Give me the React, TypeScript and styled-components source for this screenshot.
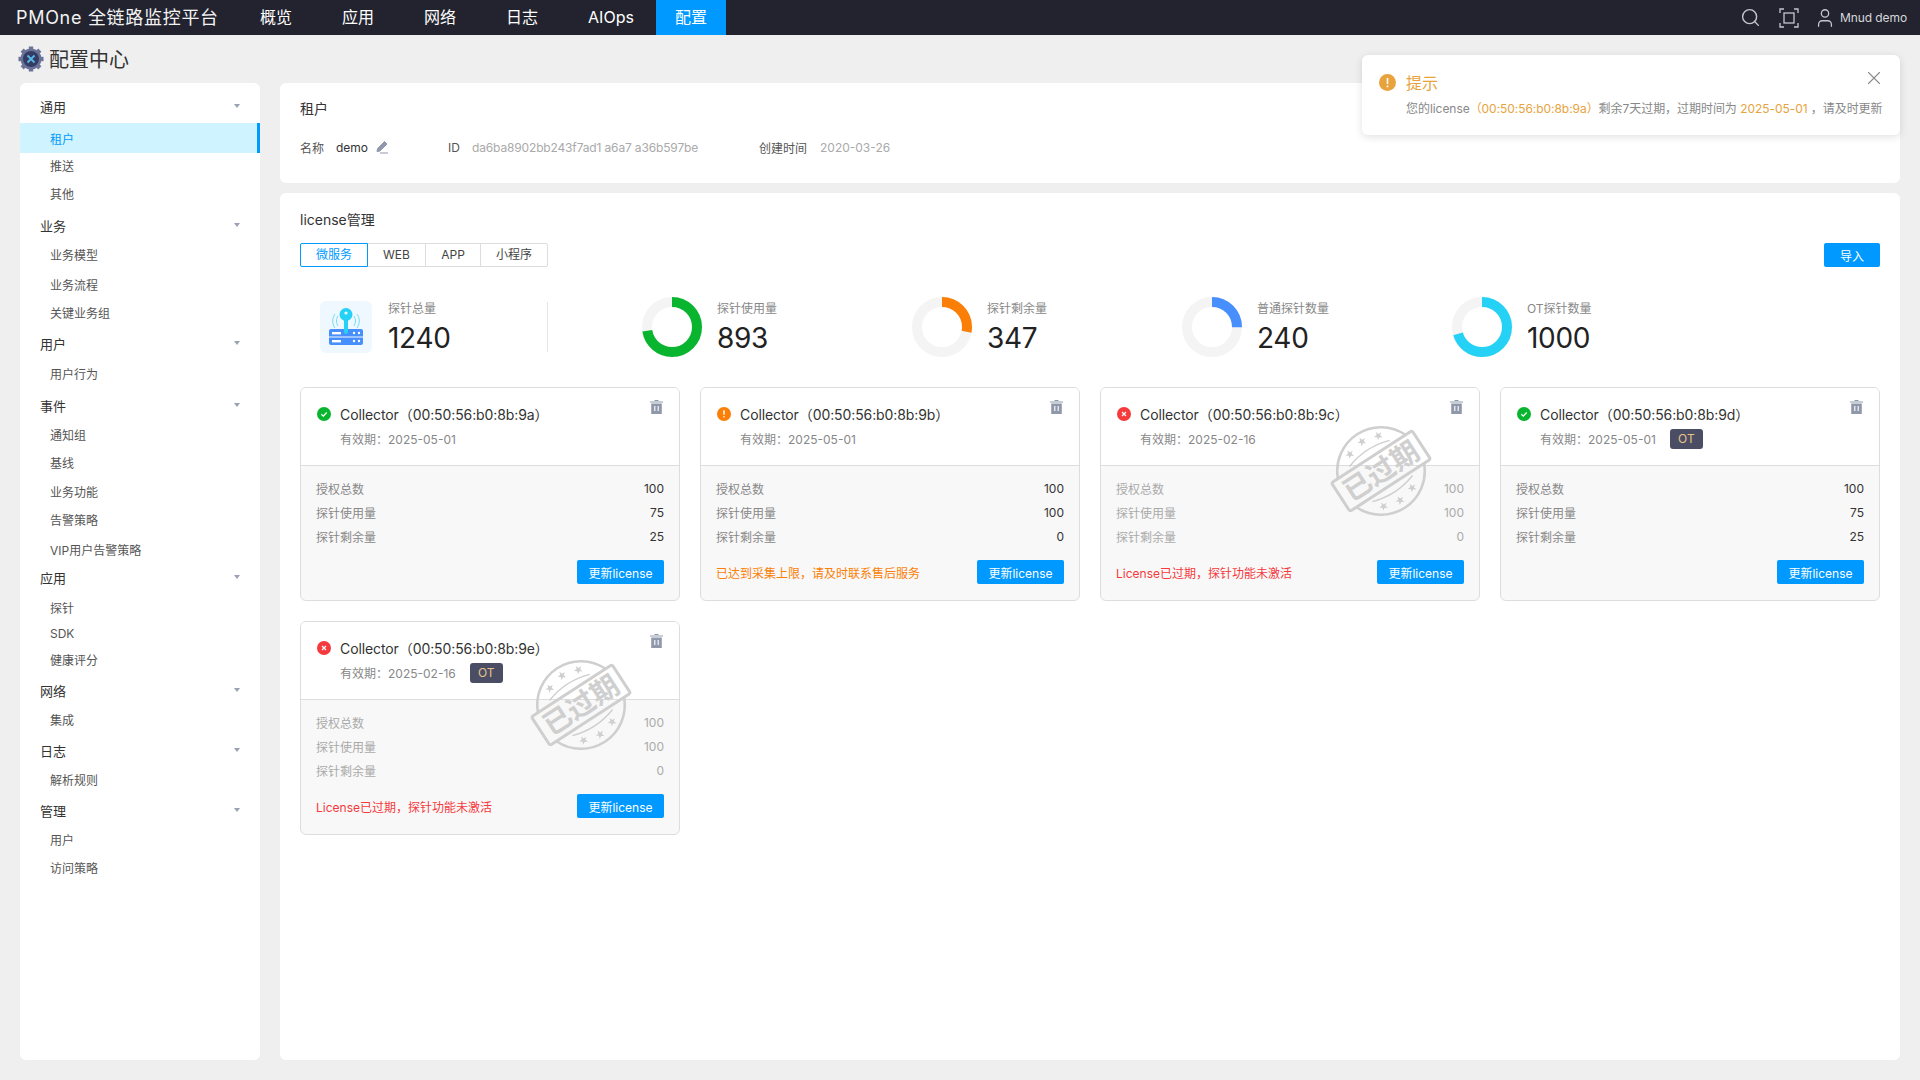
import styled, { createGlobalStyle } from "styled-components";
import { Search, User, X } from "lucide-react";

const GlobalStyle = createGlobalStyle`
    html, body {
        margin: 0;
        padding: 0;
        background-color: #efefef;
        font-family: "Inter", "Noto Sans CJK SC", sans-serif;
        overflow: hidden;
    }
    * {
        box-sizing: border-box;
    }
`;

const Page = styled.div`
    width: 1920px;
    height: 1080px;
    position: relative;
`;
const TopBar = styled.header`
    height: 35px;
    display: flex;
    align-items: stretch;
    background-color: #22232f;
    color: #fff;
`;
const Logo = styled.div`
    width: 240px;
    padding-left: 16px;
    line-height: 35px;
    font-size: 18px;
    letter-spacing: 0.7px;
    white-space: nowrap;
    color: #f2f2f2;
`;
const Nav = styled.nav`
    display: flex;
    gap: 10px;
`;
const NavItem = styled.a<{ $active?: boolean }>`
    padding: 0 ${(p) => (p.$active ? 19 : 20)}px;
    margin-left: ${(p) => (p.$active ? "-8px" : "0")};
    line-height: 35px;
    font-size: 16px;
    color: #fff;
    background-color: ${(p) => (p.$active ? "#0099ff" : "transparent")};
`;
const TopRight = styled.div`
    margin-left: auto;
    display: flex;
    align-items: center;
    padding-right: 13px;
    color: #c4c6cc;
`;
const TopIcon = styled.span<{ $gap: number }>`
    display: flex;
    margin-right: ${(p) => p.$gap}px;
`;
const UserName = styled.span`
    font-size: 12px;
    letter-spacing: -0.1px;
    color: #d6d7da;
`;
const TitleBar = styled.div`
    height: 48px;
    display: flex;
    align-items: center;
    gap: 5px;
    padding: 0 0 0 18px;
    font-size: 20px;
    color: #333;
`;
const TitleText = styled.span`
    margin-top: -2px;
`;
const Content = styled.div`
    height: 977px;
    display: flex;
    gap: 20px;
    padding: 0 20px;
`;
const Sidebar = styled.aside`
    width: 240px;
    padding-top: 10px;
    background-color: #fff;
    border-radius: 6px;
`;
const GroupHead = styled.div<{ $gap: number }>`
    height: 26px;
    margin-top: ${(p) => p.$gap}px;
    padding: 0 20px;
    display: flex;
    align-items: center;
    justify-content: space-between;
    font-size: 13px;
    color: #333;
`;
const Caret = styled.i`
    width: 0;
    height: 0;
    border-left: 3.5px solid transparent;
    border-right: 3.5px solid transparent;
    border-top: 4.5px solid #9aa1b3;
`;
const SideItem = styled.div<{ $gap: number; $active?: boolean }>`
    height: ${(p) => (p.$active ? 30 : 26)}px;
    margin-top: ${(p) => p.$gap}px;
    padding-left: 30px;
    display: flex;
    align-items: center;
    font-size: 12px;
    color: ${(p) => (p.$active ? "#0099ff" : "#555")};
    background-color: ${(p) => (p.$active ? "#cff3ff" : "transparent")};
    border-right: ${(p) => (p.$active ? "3px solid #0099ff" : "none")};
`;
const Main = styled.main`
    flex: 1;
    min-width: 0;
    display: flex;
    flex-direction: column;
    gap: 10px;
`;
const TenantCard = styled.section`
    height: 100px;
    padding: 16px 20px 0;
    background-color: #fff;
    border-radius: 6px;
`;
const SectionTitle = styled.h2`
    margin: 0;
    font-size: 14px;
    font-weight: 400;
    line-height: 20px;
    color: #333;
`;
const TenantRow = styled.div`
    margin-top: 18px;
    height: 20px;
    display: flex;
    align-items: center;
    font-size: 12px;
    color: #555;
`;
const Field = styled.span<{ $w: number }>`
    width: ${(p) => p.$w}px;
    flex: none;
    display: flex;
    align-items: center;
`;
const Muted = styled.span`
    color: #aaa;
`;
const TenantId = styled(Muted)`
    letter-spacing: -0.15px;
`;
const Dark = styled.span`
    color: #333;
`;
const LicenseCard = styled.section`
    flex: 1;
    padding: 17px 20px 0;
    background-color: #fff;
    border-radius: 6px;
`;
const ToolRow = styled.div`
    margin-top: 13px;
    display: flex;
    justify-content: space-between;
`;
const Tabs = styled.div`
    display: flex;
    height: 24px;
`;
const Tab = styled.div<{ $active?: boolean; $w: number }>`
    width: ${(p) => p.$w}px;
    margin-left: -1px;
    text-align: center;
    line-height: 22px;
    font-size: 12px;
    color: ${(p) => (p.$active ? "#0099ff" : "#444")};
    border: 1px solid ${(p) => (p.$active ? "#0099ff" : "#ddd")};
    position: relative;
    z-index: ${(p) => (p.$active ? 1 : 0)};
    &:first-child {
        margin-left: 0;
        border-radius: 2px 0 0 2px;
    }
    &:last-child {
        border-radius: 0 2px 2px 0;
    }
`;
const PrimaryButton = styled.button<{ $w: number }>`
    width: ${(p) => p.$w}px;
    height: 24px;
    padding: 0;
    border: none;
    border-radius: 2px;
    background-color: #0099ff;
    color: #fff;
    font-size: 12px;
    font-family: inherit;
    white-space: nowrap;
`;
const Stats = styled.div`
    margin-top: 30px;
    height: 60px;
    display: flex;
    padding-left: 20px;
`;
const TotalStat = styled.div`
    width: 322px;
    flex: none;
    display: flex;
    align-items: center;
`;
const StatIconBox = styled.div`
    width: 52px;
    height: 52px;
    flex: none;
    margin-right: 16px;
    border-radius: 6px;
    background-color: #f0f8ff;
    display: flex;
    align-items: center;
    justify-content: center;
`;
const Divider = styled.i`
    width: 1px;
    height: 50px;
    margin-left: 69px;
    background-color: #e6e6e6;
`;
const DonutStat = styled.div`
    width: 270px;
    flex: none;
    display: flex;
    align-items: center;
    gap: 15px;
`;
const StatText = styled.div`
    align-self: stretch;
    padding-top: 4px;
    display: flex;
    flex-direction: column;
    min-width: 90px;
`;
const StatLabel = styled.div`
    font-size: 12px;
    line-height: 16px;
    color: #888;
`;
const StatValue = styled.div`
    margin-top: 1px;
    font-size: 28px;
    line-height: 40px;
    letter-spacing: -0.3px;
    color: #222;
`;
const Grid = styled.div`
    margin-top: 30px;
    display: grid;
    grid-template-columns: repeat(4, 380px);
    gap: 20px;
`;
const Card = styled.div`
    height: 214px;
    position: relative;
    overflow: hidden;
    border: 1px solid #ddd;
    border-radius: 6px;
    background-color: #f8f8f8;
    display: flex;
    flex-direction: column;
`;
const CardHead = styled.div`
    height: 78px;
    flex: none;
    padding: 16px 16px 0;
    background-color: #fff;
    border-bottom: 1px solid #ddd;
    position: relative;
`;
const CardTitle = styled.div`
    height: 20px;
    display: flex;
    align-items: center;
    gap: 9px;
    font-size: 14px;
    letter-spacing: -0.1px;
    color: #333;
`;
const Expiry = styled.div`
    margin-top: 4px;
    height: 20px;
    padding-left: 23px;
    display: flex;
    align-items: center;
    gap: 14px;
    font-size: 12px;
    color: #888;
`;
const OtBadge = styled.span`
    width: 33px;
    height: 20px;
    margin-top: 2px;
    border-radius: 3px;
    background-color: #4a4d63;
    color: #e8c48c;
    text-align: center;
    line-height: 20px;
`;
const Trash = styled.svg`
    position: absolute;
    right: 16px;
    top: 12px;
`;
const CardBody = styled.div`
    flex: 1;
    padding: 10px 15px 0;
`;
const Metric = styled.div<{ $expired?: boolean }>`
    height: 24px;
    display: flex;
    align-items: center;
    justify-content: space-between;
    font-size: 12px;
    color: ${(p) => (p.$expired ? "#aaa" : "#888")};
`;
const MetricValue = styled.span<{ $expired?: boolean }>`
    color: ${(p) => (p.$expired ? "#aaa" : "#333")};
`;
const CardFoot = styled.div`
    margin-top: 12px;
    display: flex;
    align-items: center;
    justify-content: space-between;
`;
const FootNote = styled.span<{ $color: string }>`
    font-size: 12px;
    color: ${(p) => p.$color};
`;
const Stamp = styled.svg`
    position: absolute;
    left: 224px;
    top: 27px;
    pointer-events: none;
`;
const Notice = styled.div`
    position: absolute;
    left: 1362px;
    top: 55px;
    width: 538px;
    height: 80px;
    padding: 16px 17px 0;
    background-color: #fff;
    border-radius: 6px;
    box-shadow: 0 2px 8px rgba(0, 0, 0, 0.12);
`;
const NoticeHead = styled.div`
    height: 22px;
    display: flex;
    align-items: center;
    gap: 10px;
    font-size: 16px;
    color: #e8a33d;
`;
const NoticeText = styled.div`
    margin-top: 7px;
    padding-left: 27px;
    line-height: 18px;
    font-size: 12px;
    letter-spacing: -0.05px;
    color: #888;
    white-space: nowrap;
`;
const Accent = styled.span`
    color: #e8a33d;
`;
const NoticeClose = styled.span`
    position: absolute;
    right: 15px;
    top: 12px;
    display: flex;
    color: #8a8a8a;
`;

const menu = [
    { title: "通用", gap: 0, items: [["租户", 4], ["推送", -1], ["其他", 2]] },
    { title: "业务", gap: 6, items: [["业务模型", 3], ["业务流程", 4], ["关键业务组", 2]] },
    { title: "用户", gap: 5, items: [["用户行为", 4]] },
    { title: "事件", gap: 6, items: [["通知组", 3], ["基线", 2], ["业务功能", 3], ["告警策略", 2], ["VIP用户告警策略", 4]] },
    { title: "应用", gap: 2, items: [["探针", 4], ["SDK", 0], ["健康评分", 0]] },
    { title: "网络", gap: 5, items: [["集成", 3]] },
    { title: "日志", gap: 5, items: [["解析规则", 3]] },
    { title: "管理", gap: 5, items: [["用户", 3], ["访问策略", 2]] },
] as { title: string; gap: number; items: [string, number][] }[];

type Status = "ok" | "warn" | "error";

const collectors: {
    mac: string;
    date: string;
    status: Status;
    ot?: boolean;
    total: number;
    used: number;
    left: number;
    note?: string;
}[] = [
    { mac: "00:50:56:b0:8b:9a", date: "2025-05-01", status: "ok", total: 100, used: 75, left: 25 },
    { mac: "00:50:56:b0:8b:9b", date: "2025-05-01", status: "warn", total: 100, used: 100, left: 0, note: "已达到采集上限，请及时联系售后服务" },
    { mac: "00:50:56:b0:8b:9c", date: "2025-02-16", status: "error", total: 100, used: 100, left: 0, note: "License已过期，探针功能未激活" },
    { mac: "00:50:56:b0:8b:9d", date: "2025-05-01", status: "ok", ot: true, total: 100, used: 75, left: 25 },
    { mac: "00:50:56:b0:8b:9e", date: "2025-02-16", status: "error", ot: true, total: 100, used: 100, left: 0, note: "License已过期，探针功能未激活" },
];

const donuts = [
    { label: "探针使用量", value: 893, ratio: 0.72, color: "#09b52f" },
    { label: "探针剩余量", value: 347, ratio: 0.28, color: "#fb7f06" },
    { label: "普通探针数量", value: 240, ratio: 0.25, color: "#478ffc" },
    { label: "OT探针数量", value: 1000, ratio: 0.7, color: "#25d2f5" },
];

function Donut({ ratio, color }: { ratio: number; color: string }) {
    const r = 25;
    const c = 2 * Math.PI * r;
    return (
        <svg width="60" height="60" viewBox="0 0 60 60">
            <circle cx="30" cy="30" r={r} fill="none" stroke="#f4f4f4" strokeWidth="10" />
            <circle
                cx="30"
                cy="30"
                r={r}
                fill="none"
                stroke={color}
                strokeWidth="10"
                strokeDasharray={`${c * ratio} ${c}`}
                transform="rotate(-90 30 30)"
            />
        </svg>
    );
}

function StatusIcon({ status }: { status: Status }) {
    const color = status === "ok" ? "#09b52f" : status === "warn" ? "#fb7f06" : "#f5393d";
    return (
        <svg width="14" height="14" viewBox="0 0 14 14" style={{ flex: "none" }}>
            <circle cx="7" cy="7" r="7" fill={color} />
            {status === "ok" && <path d="M4.3 7.2l2 1.9 3.4-3.6" fill="none" stroke="#fff" strokeWidth="1.2" />}
            {status === "warn" && <path d="M7 3.2v4.6M7 9.2v1.4" fill="none" stroke="#fff" strokeWidth="1.5" />}
            {status === "error" && <path d="M5 5l4 4M9 5l-4 4" fill="none" stroke="#fff" strokeWidth="1.2" />}
        </svg>
    );
}

function TrashIcon() {
    return (
        <Trash width="13" height="14" viewBox="0 0 13 14">
            <path d="M4.5 0h4v1h-4zM0 1.6h13v1H0z" fill="#9099ab" />
            <path d="M1.2 3.4h10.6V14H1.2z" fill="#9099ab" />
            <path d="M4.8 6v5M8.2 6v5" stroke="#fff" strokeWidth="1.1" />
        </Trash>
    );
}

function Star({ x, y }: { x: number; y: number }) {
    return (
        <path
            transform={`translate(${x} ${y}) scale(4.6)`}
            d="M0-1 .24-.32.95-.31.38.12.59.81 0 .4-.59.81-.38.12-.95-.31-.24-.32Z"
            fill="#cfcfcf"
        />
    );
}

function ExpiredStamp() {
    return (
        <Stamp width="112" height="112" viewBox="-56 -56 112 112">
            <g transform="rotate(-33)">
                <g fill="none" stroke="#cfcfcf">
                    <path d="M-40.3-17A43.7 43.7 0 0 1 40.3-17M40.3 17A43.7 43.7 0 0 1-40.3 17" strokeWidth="2.6" />
                    <path d="M-24-21Q0-29 24-21M-24 21Q0 29 24 21" strokeWidth="1.4" />
                    <rect x="-48" y="-17" width="96" height="34" rx="2" strokeWidth="3" />
                </g>
                {[-17, 0, 17].map((x) => (
                    <Star key={`t${x}`} x={x} y={x === 0 ? -35 : -31} />
                ))}
                {[-17, 0, 17].map((x) => (
                    <Star key={`b${x}`} x={x} y={x === 0 ? 35 : 31} />
                ))}
                <text x="0" y="10" textAnchor="middle" fontSize="28" fontWeight="700" fill="#cfcfcf" fontFamily="Noto Sans CJK SC, sans-serif">
                    已过期
                </text>
            </g>
        </Stamp>
    );
}

function GearIcon() {
    return (
        <svg width="26" height="26" viewBox="0 0 26 26">
            <circle cx="13" cy="13" r="10.5" fill="#6a7397" />
            {[0, 45, 90, 135, 180, 225, 270, 315].map((a) => (
                <rect key={a} x="10.8" y="0.5" width="4.4" height="4" fill="#6a7397" transform={`rotate(${a} 13 13)`} />
            ))}
            <circle cx="13" cy="13" r="8" fill="#353c63" />
            <path d="M9.5 9.5l7 7M16.5 9.5l-7 7" stroke="#58b7e8" strokeWidth="1.8" />
        </svg>
    );
}

function ProbeIcon() {
    return (
        <svg width="36" height="38" viewBox="0 0 36 38">
            <g fill="none" stroke="#6fdcf6" strokeWidth="1">
                <path d="M10 8c-2 3-2 7 0 10M7 6c-3 4-3 10 0 14M26 8c2 3 2 7 0 10M29 6c3 4 3 10 0 14" />
            </g>
            <rect x="1" y="21" width="34" height="16" rx="2" fill="#478ffc" />
            <path d="M1 29h34" stroke="#f0f8ff" strokeWidth="1" />
            <rect x="4" y="24" width="9" height="2.4" fill="#fff" />
            <rect x="4" y="32" width="9" height="2.4" fill="#fff" />
            <circle cx="26" cy="25" r="1.2" fill="#fff" />
            <circle cx="31" cy="25" r="1.2" fill="#fff" />
            <circle cx="26" cy="33" r="1.2" fill="#fff" />
            <circle cx="31" cy="33" r="1.2" fill="#fff" />
            <circle cx="18" cy="6.5" r="6.5" fill="#25d2f5" />
            <circle cx="18" cy="5" r="1.6" fill="#f0f8ff" />
            <rect x="16" y="10" width="4" height="16" rx="2" fill="#25d2f5" />
        </svg>
    );
}

function App() {
    return (
        <Page>
            <GlobalStyle />
            <TopBar>
                <Logo>PMOne 全链路监控平台</Logo>
                <Nav>
                    <NavItem>概览</NavItem>
                    <NavItem>应用</NavItem>
                    <NavItem>网络</NavItem>
                    <NavItem>日志</NavItem>
                    <NavItem>AIOps</NavItem>
                    <NavItem $active>配置</NavItem>
                </Nav>
                <TopRight>
                    <TopIcon $gap={18}>
                        <Search size={21} strokeWidth={1.6} />
                    </TopIcon>
                    <TopIcon $gap={15}>
                        <svg width="20" height="20" viewBox="0 0 20 20" fill="none" stroke="currentColor" strokeWidth="1.3">
                            <path d="M1 5V1h4M15 1h4v4M19 15v4h-4M5 19H1v-4" />
                            <rect x="5" y="5" width="10" height="10" />
                        </svg>
                    </TopIcon>
                    <TopIcon $gap={4}>
                        <User size={22} strokeWidth={1.4} />
                    </TopIcon>
                    <UserName>Mnud demo</UserName>
                </TopRight>
            </TopBar>
            <TitleBar>
                <GearIcon />
                <TitleText>配置中心</TitleText>
            </TitleBar>
            <Content>
                <Sidebar>
                    {menu.map((group) => (
                        <div key={group.title}>
                            <GroupHead $gap={group.gap}>
                                {group.title}
                                <Caret />
                            </GroupHead>
                            {group.items.map(([name, gap]) => (
                                <SideItem key={name} $gap={gap} $active={name === "租户"}>
                                    {name}
                                </SideItem>
                            ))}
                        </div>
                    ))}
                </Sidebar>
                <Main>
                    <TenantCard>
                        <SectionTitle>租户</SectionTitle>
                        <TenantRow>
                            <Field $w={36}>名称</Field>
                            <Field $w={112}>
                                <Dark>demo</Dark>
                                <svg width="14" height="14" viewBox="0 0 14 14" style={{ marginLeft: 7 }}>
                                    <path d="M9.5 1.5l2.5 2.5-7 7-3 .6.5-3zM5 13h8" fill="#9099ab" stroke="#9099ab" strokeWidth="1" />
                                </svg>
                            </Field>
                            <Field $w={24}>ID</Field>
                            <Field $w={287}>
                                <TenantId>da6ba8902bb243f7ad1 a6a7 a36b597be</TenantId>
                            </Field>
                            <Field $w={61}>创建时间</Field>
                            <Muted>2020-03-26</Muted>
                        </TenantRow>
                    </TenantCard>
                    <LicenseCard>
                        <SectionTitle>license管理</SectionTitle>
                        <ToolRow>
                            <Tabs>
                                <Tab $active $w={68}>微服务</Tab>
                                <Tab $w={59}>WEB</Tab>
                                <Tab $w={56}>APP</Tab>
                                <Tab $w={68}>小程序</Tab>
                            </Tabs>
                            <PrimaryButton $w={56}>导入</PrimaryButton>
                        </ToolRow>
                        <Stats>
                            <TotalStat>
                                <StatIconBox>
                                    <ProbeIcon />
                                </StatIconBox>
                                <StatText>
                                    <StatLabel>探针总量</StatLabel>
                                    <StatValue>1240</StatValue>
                                </StatText>
                                <Divider />
                            </TotalStat>
                            {donuts.map((d) => (
                                <DonutStat key={d.label}>
                                    <Donut ratio={d.ratio} color={d.color} />
                                    <StatText>
                                        <StatLabel>{d.label}</StatLabel>
                                        <StatValue>{d.value}</StatValue>
                                    </StatText>
                                </DonutStat>
                            ))}
                        </Stats>
                        <Grid>
                            {collectors.map((c) => {
                                const expired = c.status === "error";
                                return (
                                    <Card key={c.mac}>
                                        <CardHead>
                                            <CardTitle>
                                                <StatusIcon status={c.status} />
                                                Collector（{c.mac}）
                                            </CardTitle>
                                            <Expiry>
                                                有效期：{c.date}
                                                {c.ot && <OtBadge>OT</OtBadge>}
                                            </Expiry>
                                            <TrashIcon />
                                        </CardHead>
                                        <CardBody>
                                            <Metric $expired={expired}>
                                                授权总数<MetricValue $expired={expired}>{c.total}</MetricValue>
                                            </Metric>
                                            <Metric $expired={expired}>
                                                探针使用量<MetricValue $expired={expired}>{c.used}</MetricValue>
                                            </Metric>
                                            <Metric $expired={expired}>
                                                探针剩余量<MetricValue $expired={expired}>{c.left}</MetricValue>
                                            </Metric>
                                            <CardFoot>
                                                <FootNote $color={expired ? "#f5393d" : "#fb7f06"}>{c.note}</FootNote>
                                                <PrimaryButton $w={87}>更新license</PrimaryButton>
                                            </CardFoot>
                                        </CardBody>
                                        {expired && <ExpiredStamp />}
                                    </Card>
                                );
                            })}
                        </Grid>
                    </LicenseCard>
                </Main>
            </Content>
            <Notice>
                <NoticeHead>
                    <svg width="17" height="17" viewBox="0 0 17 17">
                        <circle cx="8.5" cy="8.5" r="8.5" fill="#e8a33d" />
                        <path d="M8.5 4v6M8.5 11.5v1.8" stroke="#fff" strokeWidth="1.6" />
                    </svg>
                    提示
                </NoticeHead>
                <NoticeText>
                    您的license<Accent>（00:50:56:b0:8b:9a）</Accent>剩余7天过期，过期时间为 <Accent>2025-05-01</Accent> ，请及时更新
                </NoticeText>
                <NoticeClose>
                    <X size={22} strokeWidth={1.2} />
                </NoticeClose>
            </Notice>
        </Page>
    );
}

export default App;
